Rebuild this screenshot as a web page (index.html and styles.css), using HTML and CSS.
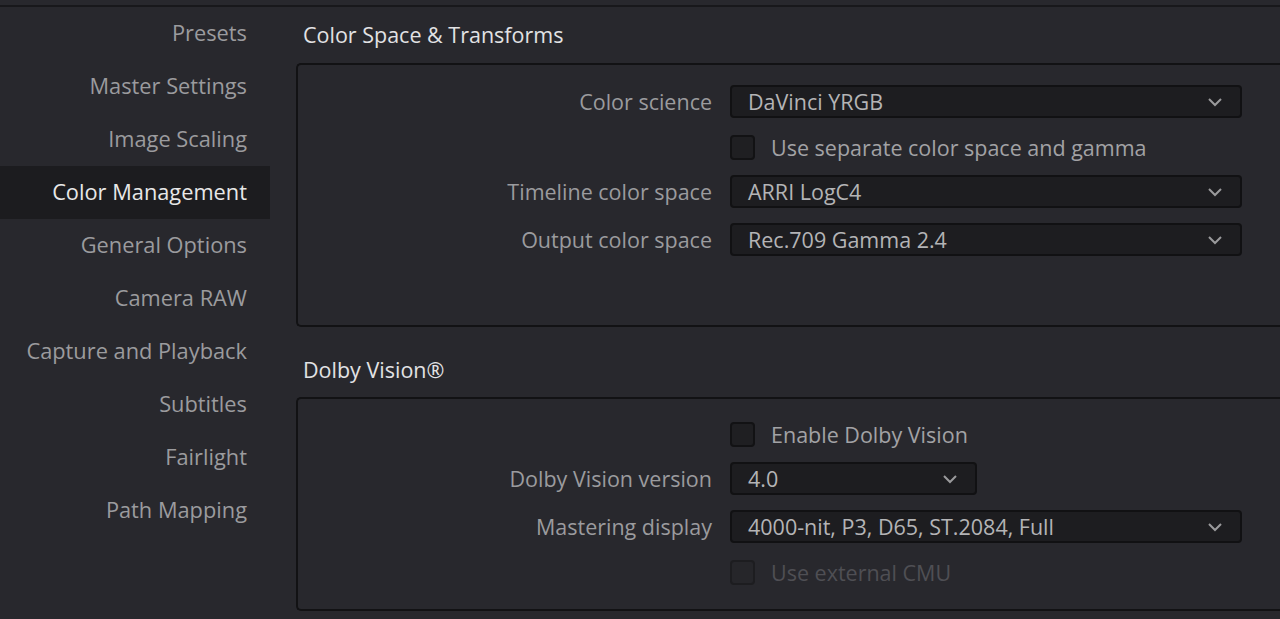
FILE: index.html
```html
<!DOCTYPE html>
<html lang="en">
<head>
    <meta charset="UTF-8">
    <meta name="viewport" content="width=device-width, initial-scale=1.0">
    <title>Project Settings</title>
    <link rel="stylesheet" href="styles.css">
</head>
<body>
    <div class="app">
        <nav class="sidebar">
            <div class="nav-item">Presets</div>
            <div class="nav-item">Master Settings</div>
            <div class="nav-item">Image Scaling</div>
            <div class="nav-item active">Color Management</div>
            <div class="nav-item">General Options</div>
            <div class="nav-item">Camera RAW</div>
            <div class="nav-item">Capture and Playback</div>
            <div class="nav-item">Subtitles</div>
            <div class="nav-item">Fairlight</div>
            <div class="nav-item">Path Mapping</div>
        </nav>

        <main class="content">
            <h2 class="section-title">Color Space &amp; Transforms</h2>
            <div class="group group-color">
                <div class="row">
                    <label class="row-label">Color science</label>
                    <div class="select">
                        <span>DaVinci YRGB</span>
                        <svg class="chevron" width="16" height="10" viewBox="0 0 16 10"><path d="M2 2 L8 8 L14 2" fill="none" stroke="#9a9a9c" stroke-width="2"/></svg>
                    </div>
                </div>
                <div class="row">
                    <span class="row-label"></span>
                    <div class="check">
                        <span class="box"></span>
                        <span>Use separate color space and gamma</span>
                    </div>
                </div>
                <div class="row tight">
                    <label class="row-label">Timeline color space</label>
                    <div class="select">
                        <span>ARRI LogC4</span>
                        <svg class="chevron" width="16" height="10" viewBox="0 0 16 10"><path d="M2 2 L8 8 L14 2" fill="none" stroke="#9a9a9c" stroke-width="2"/></svg>
                    </div>
                </div>
                <div class="row row-gap">
                    <label class="row-label">Output color space</label>
                    <div class="select">
                        <span>Rec.709 Gamma 2.4</span>
                        <svg class="chevron" width="16" height="10" viewBox="0 0 16 10"><path d="M2 2 L8 8 L14 2" fill="none" stroke="#9a9a9c" stroke-width="2"/></svg>
                    </div>
                </div>
            </div>

            <h2 class="section-title second">Dolby Vision®</h2>
            <div class="group group-dolby">
                <div class="row">
                    <span class="row-label"></span>
                    <div class="check">
                        <span class="box"></span>
                        <span>Enable Dolby Vision</span>
                    </div>
                </div>
                <div class="row tight">
                    <label class="row-label">Dolby Vision version</label>
                    <div class="select short">
                        <span>4.0</span>
                        <svg class="chevron" width="16" height="10" viewBox="0 0 16 10"><path d="M2 2 L8 8 L14 2" fill="none" stroke="#9a9a9c" stroke-width="2"/></svg>
                    </div>
                </div>
                <div class="row row-gap">
                    <label class="row-label">Mastering display</label>
                    <div class="select">
                        <span>4000-nit, P3, D65, ST.2084, Full</span>
                        <svg class="chevron" width="16" height="10" viewBox="0 0 16 10"><path d="M2 2 L8 8 L14 2" fill="none" stroke="#9a9a9c" stroke-width="2"/></svg>
                    </div>
                </div>
                <div class="row">
                    <span class="row-label"></span>
                    <div class="check disabled">
                        <span class="box"></span>
                        <span>Use external CMU</span>
                    </div>
                </div>
            </div>
        </main>
    </div>
</body>
</html>
```

FILE: styles.css
```css
body {
    margin: 0;
    padding-top: 5px;
    background-color: #28282d;
    font-family: "Open Sans", "Noto Sans", sans-serif;
    font-size: 21.5px;
    overflow: hidden;
}

.app {
    display: flex;
    border-top: 2px solid #18181b;
    height: 612px;
}

.sidebar {
    width: 270px;
    flex-shrink: 0;
}

.nav-item {
    height: 53px;
    line-height: 51px;
    padding-bottom: 2px;
    box-sizing: border-box;
    text-align: right;
    padding-right: 23px;
    font-size: 21.8px;
    color: #9b9b9e;
    white-space: nowrap;
}

.nav-item.active {
    background-color: #1c1c1f;
    color: #e8e8e8;
}

.content {
    flex: 1;
    margin-left: 26px;
    min-width: 0;
}

.section-title {
    margin: 0;
    height: 56px;
    line-height: 56px;
    padding-left: 7px;
    font-size: 21.5px;
    font-weight: normal;
    color: #e2e2e4;
}

.section-title.second {
    height: 70px;
    line-height: 86px;
}

.group {
    border: 2px solid #121214;
    border-right: none;
    border-radius: 5px 0 0 5px;
    padding-top: 20px;
    display: flex;
    flex-direction: column;
    gap: 13px;
}

.group-color {
    box-sizing: border-box;
    height: 264px;
}

.group-dolby {
    height: 214px;
    box-sizing: border-box;
    padding-top: 19px;
}

.row {
    display: flex;
    align-items: center;
    height: 33px;
    gap: 18px;
}

.row.row-gap {
    margin-top: 2px;
}

.row.tight {
    margin-top: -2px;
}

.row-label {
    width: 414px;
    text-align: right;
    color: #9b9b9e;
    white-space: nowrap;
}

.select {
    width: 512px;
    height: 33px;
    box-sizing: border-box;
    background-color: #1d1d20;
    border: 2px solid #111113;
    border-radius: 4px;
    display: flex;
    align-items: center;
    justify-content: space-between;
    padding: 0 17px 0 16px;
    color: #b4b4b6;
}

.select.short {
    width: 247px;
}

.chevron {
    display: block;
}

.check {
    display: flex;
    align-items: center;
    gap: 16px;
    color: #a2a2a5;
}

.check .box {
    width: 25px;
    height: 25px;
    box-sizing: border-box;
    background-color: #1f1f22;
    border: 2px solid #121214;
    border-radius: 4px;
}

.check.disabled {
    color: #4f4f54;
}

.check.disabled .box {
    background-color: #26262a;
    border-color: #1d1d20;
}
```
